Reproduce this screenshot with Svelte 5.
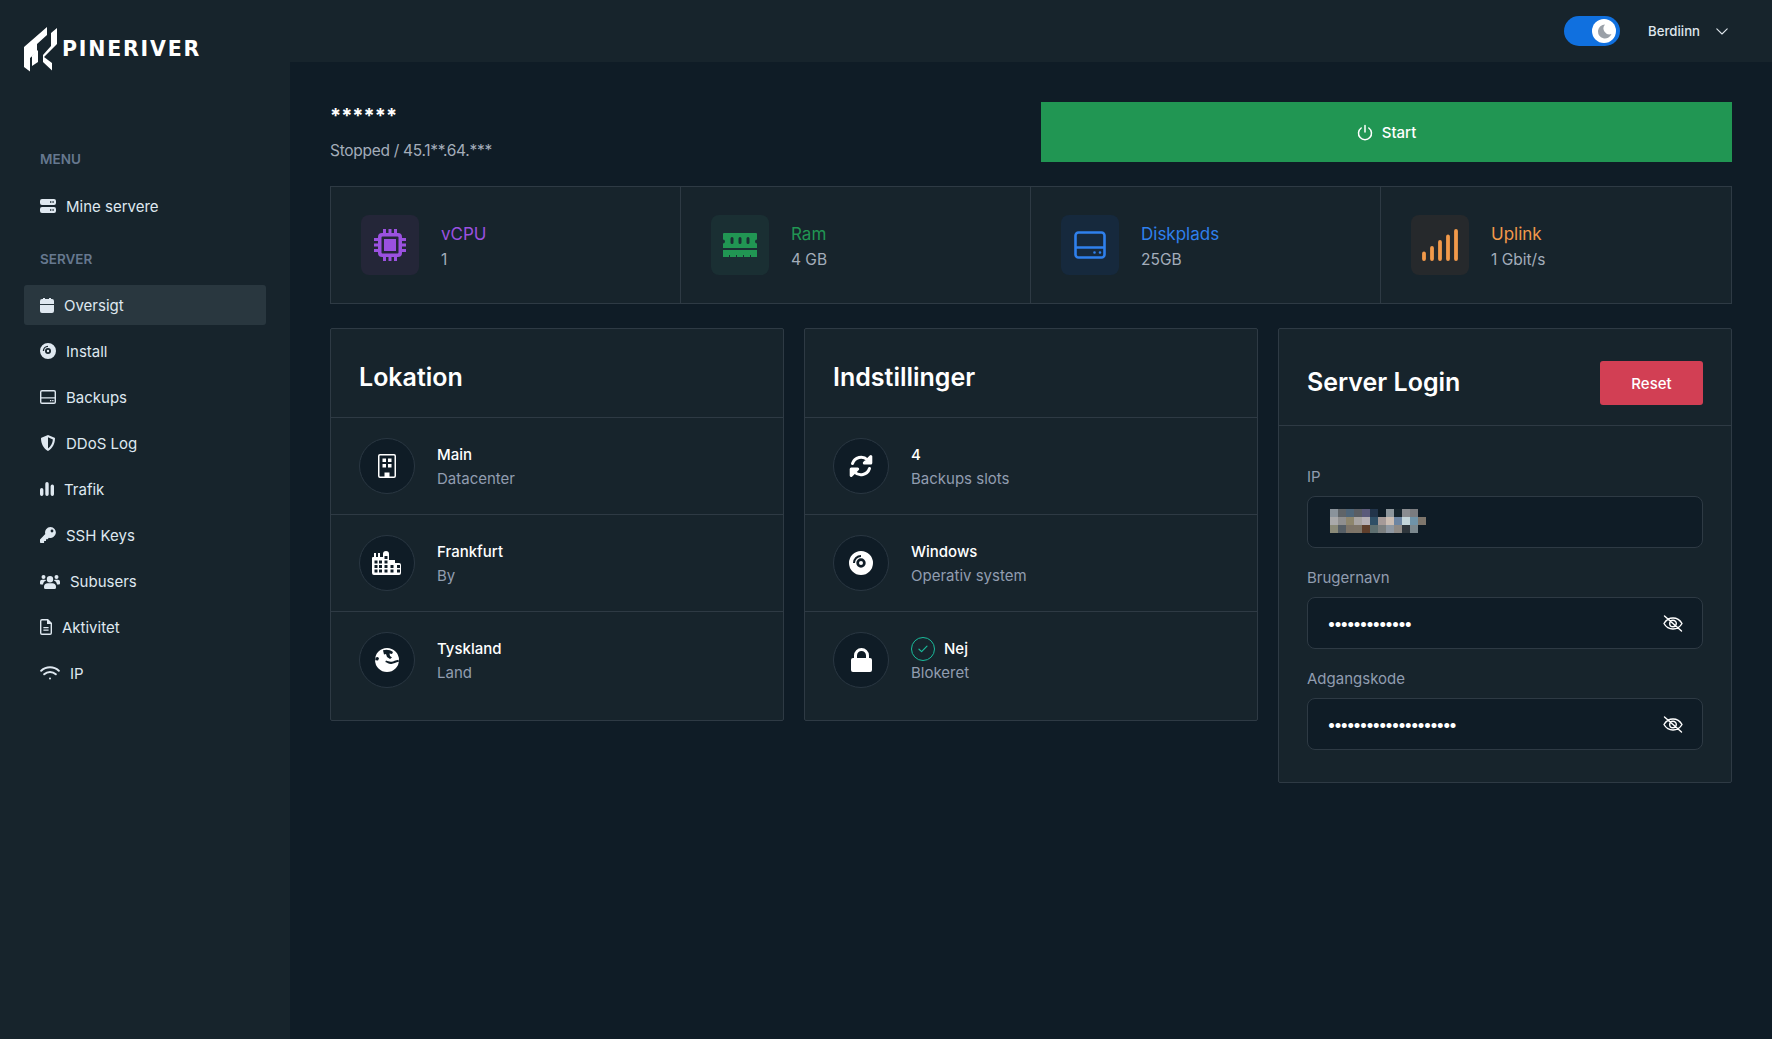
<script lang="ts">
  interface Icon {
    w: number;
    h: number;
    d: string;
    stroke?: number;
  }

  const icons: Record<string, Icon> = {
    server: { w: 16, h: 14, d: "M2 0h12a2 2 0 012 2v2a2 2 0 01-2 2H2a2 2 0 01-2-2V2a2 2 0 012-2zM10 2.3h1.4v1.4H10zM12.4 2.3h1.4v1.4h-1.4zM2 8h12a2 2 0 012 2v2a2 2 0 01-2 2H2a2 2 0 01-2-2v-2a2 2 0 012-2zM10 10.3h1.4v1.4H10zM12.4 10.3h1.4v1.4h-1.4z" },
    calendar: { w: 14, h: 15, d: "M3 0h2v1h4V0h2v1h1a2 2 0 012 2v3H0V3a2 2 0 012-2h1zM0 7h14v6a2 2 0 01-2 2H2a2 2 0 01-2-2z" },
    disc: { w: 16, h: 16, d: "M8 0a8 8 0 110 16A8 8 0 018 0zM8 5a3 3 0 100 6 3 3 0 000-6zM8 6.8a1.2 1.2 0 110 2.4 1.2 1.2 0 010-2.4zM2.8 8A5.2 5.2 0 018 2.8v1.3A3.9 3.9 0 004.1 8z" },
    hdd: { w: 16, h: 14, d: "M2 0h12a2 2 0 012 2v10a2 2 0 01-2 2H2a2 2 0 01-2-2V2a2 2 0 012-2zM2 1.4a.6.6 0 00-.6.6v5.2h13.2V2a.6.6 0 00-.6-.6zM1.4 8.6V12a.6.6 0 00.6.6h12a.6.6 0 00.6-.6V8.6zM10 10h1.3v1.3H10zM12.2 10h1.3v1.3h-1.3z" },
    shield: { w: 16, h: 16, d: "M8 0l6.6 2.8c.3.1.4.4.4.7 0 5-2.5 10-7 12.5C3.500 13.500 1 8.500 1 3.500c0-.3.1-.6.4-.7zM8 2.300V13.600c2.800-2 4.700-5.500 4.900-9z" },
    bars: { w: 14, h: 14, d: "M1.700 6a1.700 1.700 0 011.700 1.700v4.600a1.700 1.700 0 01-3.400 0V7.700A1.700 1.700 0 011.700 6zM7 0a1.700 1.700 0 011.700 1.700v10.600a1.700 1.700 0 01-3.400 0V1.700A1.700 1.700 0 017 0zM12.300 2.500A1.700 1.700 0 0114 4.200v8.100a1.700 1.700 0 01-3.400 0V4.200a1.700 1.700 0 011.700-1.700z" },
    key: { w: 16, h: 16, d: "M10.500 0a5.500 5.500 0 11-1.600 10.800L7.500 12.300H6v1.800H4.100V16H.8a.8.8 0 01-.8-.8v-2.700L5.300 7.100A5.500 5.500 0 0110.500 0zM12 2.600a1.400 1.400 0 100 2.800 1.400 1.400 0 000-2.800z" },
    users: { w: 20, h: 15, d: "M3.500 1a2 2 0 110 4 2 2 0 010-4zM16.500 1a2 2 0 110 4 2 2 0 010-4zM10 2a3.200 3.200 0 110 6.400A3.200 3.200 0 0110 2zM7.500 9.200h5c2 0 3.500 1.500 3.500 3.500v.8a1.500 1.500 0 01-1.500 1.500h-9A1.500 1.500 0 014 13.500v-.8c0-2 1.500-3.500 3.500-3.500zM2 5.800h3c.5 0 1 .2 1.300.5-1.700.7-3 2.100-3.300 4.200H1a1 1 0 01-1-1V7.800a2 2 0 012-2zM15 5.800h3a2 2 0 012 2v1.700a1 1 0 01-1 1h-2c-.3-2.100-1.600-3.500-3.300-4.200.3-.3.800-.5 1.300-.5z" },
    file: { w: 12, h: 16, d: "M2 0h6l4 4v10a2 2 0 01-2 2H2a2 2 0 01-2-2V2a2 2 0 012-2zM2 1.400a.6.6 0 00-.6.6v12c0 .3.3.6.6.6h8c.3 0 .6-.3.6-.6V5H7V1.400zM3.400 8h5.200v1.200H3.400zM3.400 10.600h5.200v1.200H3.400z" },
    wifi: { w: 20, h: 14, stroke: 2, d: "M1.200 4.800a13 13 0 0117.600 0M4.200 8.300a8.500 8.500 0 0111.600 0M10 12.400h.01" },
    cpu: { w: 32, h: 32, d: "M8 4h1V0h3v4h2.500V0h3v4H20V0h3v4h1a4 4 0 014 4v1h4v3h-4v2.500h4v3h-4V20h4v3h-4v1a4 4 0 01-4 4h-1v4h-3v-4h-2.500v4h-3v-4H12v4H9v-4H8a4 4 0 01-4-4v-1H0v-3h4v-2.500H0v-3h4V12H0V9h4V8a4 4 0 014-4zM8.500 7.500a1 1 0 00-1 1v15a1 1 0 001 1h15a1 1 0 001-1v-15a1 1 0 00-1-1zM10 10h12v12H10z" },
    ram: { w: 36, h: 24, d: "M2 0h32a1 1 0 011 1v5.500a2 2 0 000 4V15H1v-4.500a2 2 0 000-4V1a1 1 0 011-1zM10 4a1.500 1.500 0 00-1.500 1.500v4a1.500 1.500 0 003 0v-4A1.500 1.500 0 0010 4zM18 4a1.500 1.500 0 00-1.500 1.500v4a1.500 1.500 0 003 0v-4A1.500 1.500 0 0018 4zM26 4a1.500 1.500 0 00-1.500 1.500v4a1.500 1.500 0 003 0v-4A1.500 1.500 0 0026 4zM1 17h34v7h-6v-2h-1v2h-6v-2h-1v2h-6v-2h-1v2H8v-2H7v2H1z" },
    disk: { w: 32, h: 28, stroke: 2.6, d: "M4.500 1.500h23a3 3 0 013 3v19a3 3 0 01-3 3h-23a3 3 0 01-3-3v-19a3 3 0 013-3zM1.500 16.500h29M20.500 21.500h.01M26 21.500h.01" },
    signal: { w: 36, h: 32, stroke: 3.8, d: "M2 24.500V30M10 19v11M18 13v17M26 7.500V30M34 2v28" },
    building: { w: 18, h: 24, d: "M2 0h14a2 2 0 012 2v20a2 2 0 01-2 2H2a2 2 0 01-2-2V2a2 2 0 012-2zM2 1.500a.5.5 0 00-.5.5v20c0 .3.2.5.5.5h4.500V18.500h5v4H16c.3 0 .5-.2.5-.5V2a.5.5 0 00-.5-.5zM4.500 4.500h3.500V8H4.500zM10 4.500h3.500V8H10zM4.500 10h3.500v3.500H4.500zM10 10h3.500v3.500H10z" },
    city: { w: 30, h: 24, d: "M1 6h1V2h2v4h2V2h2v4h3V3a3 3 0 016 0v6h6v3h4a2 2 0 012 2v8a2 2 0 01-2 2H2a2 2 0 01-2-2V7a1 1 0 011-1zM2.500 9.500h3v3h-3zM7 9.500h3v3H7zM2.500 14h3v3h-3zM7 14h3v3H7zM2.500 18.500h3v3h-3zM7 18.500h3v3H7zM12.500 5h3v3h-3zM12.500 9.500h3v3h-3zM12.500 14h3v3h-3zM12.500 18.500h3v3h-3zM18.500 14h3v3h-3zM18.500 18.500h3v3h-3zM25 14h3v3h-3zM25 18.500h3v3h-3z" },
    globe: { w: 24, h: 24, d: "M12 0a12 12 0 110 24 12 12 0 010-24zM8 2.300c3-1.200 7-.8 10 1.700l-1 2-2.500-.5.5 2.500 2 1.500-2 1.500-3-2-1-3-2 .5zM11 12.500c2 .5 3.500 1.500 5.500 1.200 2-.3 4-1.500 7-2l.3 2c-3 .5-5 2-7.500 2.200-2.500.2-4-1.500-6-2zM.5 9.500l2.500-.5 1 1.500-1 2-2.800-.3z" },
    sync: { w: 24, h: 24, stroke: 3, d: "M3.500 9.500A9 9 0 0118.500 6L20 7.500M21.800 2.500V9h-6.500zM20.500 14.500A9 9 0 015.500 18L4 16.500M2.200 21.500V15h6.500z" },
    discLg: { w: 24, h: 24, d: "M12 0a12 12 0 110 24 12 12 0 010-24zM12 7.300a4.700 4.700 0 100 9.400 4.700 4.700 0 000-9.400zM12 10a2 2 0 110 4 2 2 0 010-4zM4 12a8 8 0 018-8v2a6 6 0 00-6 6z" },
    lock: { w: 21, h: 24, d: "M3 10V7.500a7.500 7.500 0 0115 0V10h1a2 2 0 012 2v10a2 2 0 01-2 2H2a2 2 0 01-2-2V12a2 2 0 012-2zM6 10h9V7.500a4.500 4.500 0 00-9 0z" },
    power: { w: 16, h: 17, stroke: 1.5, d: "M8 1.500V8M4.200 4A6.500 6.500 0 1011.800 4" },
    eyeOff: { w: 20, h: 17, stroke: 1.4, d: "M1 8.500c2-3.500 5-5.500 9-5.500s7 2 9 5.500c-2 3.500-5 5.500-9 5.500s-7-2-9-5.500zM10 5.200a3.300 3.300 0 110 6.600 3.300 3.300 0 010-6.600zM1.500 1l17 15" },
    chevron: { w: 12, h: 7, stroke: 1.1, d: "M.8.8L6 6l5.200-5.200" },
    check: { w: 10, h: 8, stroke: 1.2, d: "M1 4.200l2.600 2.400L9 1.200" },
  };

  const nav = [
    { icon: "calendar", label: "Oversigt", active: true },
    { icon: "disc", label: "Install" },
    { icon: "hdd", label: "Backups" },
    { icon: "shield", label: "DDoS Log" },
    { icon: "bars", label: "Trafik" },
    { icon: "key", label: "SSH Keys" },
    { icon: "users", label: "Subusers" },
    { icon: "file", label: "Aktivitet" },
    { icon: "wifi", label: "IP" },
  ];

  const stats = [
    { icon: "cpu", title: "vCPU", value: "1", tone: "purple" },
    { icon: "ram", title: "Ram", value: "4 GB", tone: "green" },
    { icon: "disk", title: "Diskplads", value: "25GB", tone: "blue" },
    { icon: "signal", title: "Uplink", value: "1 Gbit/s", tone: "orange" },
  ];

  const location = [
    { icon: "building", title: "Main", sub: "Datacenter" },
    { icon: "city", title: "Frankfurt", sub: "By" },
    { icon: "globe", title: "Tyskland", sub: "Land" },
  ];

  const settings = [
    { icon: "sync", title: "4", sub: "Backups slots" },
    { icon: "discLg", title: "Windows", sub: "Operativ system" },
    { icon: "lock", title: "Nej", sub: "Blokeret", ok: true },
  ];

  // censored ip, one row per line of mosaic blocks
  const mosaic = [
    ["#8a939b", "#5f6468", "#4f6578", "#5a5d63", "#5b5a7a", "#22344a", "", "#8d969c", "#16242c", "#8a8c90", "#7a7c80"],
    ["#a9a9aa", "#8f8f8f", "#8e866d", "#a8a4a2", "#b6b0b5", "#2f4f66", "#a59a98", "#cbbdb3", "#6d85a2", "#c3d5da", "#6f93a8", "#7e766c"],
    ["#8a8a78", "#565f66", "#7d7468", "#7e7568", "#5f3f2c", "#5e6f70", "#7c8080", "#8f98a2", "#8e8a86", "#2e363c", "#7b888e"],
  ];
</script>

{#snippet glyph(name: string)}
  {@const i = icons[name]}
  <svg
    class="glyph"
    class:line={i.stroke}
    width={i.w}
    height={i.h}
    viewBox="0 0 {i.w} {i.h}"
    stroke-width={i.stroke}
  >
    <path d={i.d} />
  </svg>
{/snippet}

{#snippet infoCard(heading: string, rows: { icon: string; title: string; sub: string; ok?: boolean }[])}
  <section class="card">
    <h2 class="card-head">{heading}</h2>
    <div class="rows">
      {#each rows as row}
        <div class="row">
          <span class="circle">{@render glyph(row.icon)}</span>
          <div>
            <div class="row-title">
              {#if row.ok}
                <span class="ok">{@render glyph("check")}</span>
              {/if}
              {row.title}
            </div>
            <div class="row-sub">{row.sub}</div>
          </div>
        </div>
      {/each}
    </div>
  </section>
{/snippet}

<div class="app">
  <aside class="sidebar">
    <div class="logo">
      <svg width="34" height="46" viewBox="24 26 34 46">
        <path fill="#fff" d="M24 47L47 27V35L37 44V52L30 58V71.500L24 67Z" />
        <path fill="#fff" d="M32 56L38 50V62L32 66Z" />
        <path fill="#fff" d="M51 33L57 28V44L44 57L52 63V70.500L43 62V55L51 46Z" />
      </svg>
      <span>PINERIVER</span>
    </div>

    <div class="nav-label menu">MENU</div>
    <a class="item" href="#servers">{@render glyph("server")}<span>Mine servere</span></a>

    <div class="nav-label server">SERVER</div>
    <nav class="items">
      {#each nav as item}
        <a class="item" class:active={item.active} href="#{item.label}">
          {@render glyph(item.icon)}<span>{item.label}</span>
        </a>
      {/each}
    </nav>
  </aside>

  <div class="content">
    <header class="topbar">
      <span class="toggle">
        <span class="knob">
          <svg width="15" height="15" viewBox="0 0 15 15"><path fill="#9aa0a8" d="M8 .5a7 7 0 106.500 9.600A6 6 0 018 .5z" /></svg>
        </span>
      </span>
      <span class="user">Berdiinn</span>
      {@render glyph("chevron")}
    </header>

    <main class="main">
      <div class="top">
        <div class="name">
          <div class="stars">******</div>
          <div class="status">Stopped / 45.1**.64.***</div>
        </div>
        <button class="start">{@render glyph("power")}<span>Start</span></button>
      </div>

      <div class="stats">
        {#each stats as s}
          <div class="stat {s.tone}">
            <span class="stat-icon">{@render glyph(s.icon)}</span>
            <div>
              <div class="stat-title">{s.title}</div>
              <div class="stat-value">{s.value}</div>
            </div>
          </div>
        {/each}
      </div>

      <div class="cards">
        {@render infoCard("Lokation", location)}
        {@render infoCard("Indstillinger", settings)}

        <section class="card">
          <div class="login-head">
            <h2>Server Login</h2>
            <button class="reset">Reset</button>
          </div>
          <div class="form">
            <div class="field-label">IP</div>
            <div class="input">
              <svg class="mosaic" width="96" height="24" viewBox="0 0 96 24">
                {#each mosaic as line, y}
                  {#each line as c, x}
                    {#if c}<rect x={x * 8} y={y * 8} width="8" height="8" fill={c} />{/if}
                  {/each}
                {/each}
              </svg>
            </div>
            <div class="field-label">Brugernavn</div>
            <div class="input">
              <span class="dots">•••••••••••••</span>
              {@render glyph("eyeOff")}
            </div>
            <div class="field-label">Adgangskode</div>
            <div class="input">
              <span class="dots">••••••••••••••••••••</span>
              {@render glyph("eyeOff")}
            </div>
          </div>
        </section>
      </div>
    </main>
  </div>
</div>

<style>
  :global(body) {
    background: #0f1c26;
    font-family: Inter, "Liberation Sans", sans-serif;
  }

  .glyph {
    flex: none;
    fill: currentColor;
    fill-rule: evenodd;
  }

  .glyph.line {
    fill: none;
    stroke: currentColor;
    stroke-linecap: round;
    stroke-linejoin: round;
  }

  .app {
    display: grid;
    grid-template-columns: 290px 1fr;
    min-height: 1039px;
  }

  .sidebar {
    background: #17242c;
    padding: 0 24px;
  }

  .logo {
    display: flex;
    align-items: center;
    gap: 4px;
    padding-top: 26px;
    height: 46px;
    color: #fff;
    font: 700 20.5px "DejaVu Sans", sans-serif;
    letter-spacing: 1.8px;
  }

  .nav-label {
    padding-left: 16px;
    line-height: 20px;
    color: #66788f;
    font-size: 13.5px;
    font-weight: 600;
  }

  .menu {
    margin-top: 77px;
    margin-bottom: 17px;
  }

  .server {
    margin-top: 23px;
    margin-bottom: 16px;
  }

  .items {
    display: flex;
    flex-direction: column;
    gap: 6px;
  }

  .item {
    display: flex;
    align-items: center;
    gap: 10px;
    height: 40px;
    padding-left: 16px;
    border-radius: 3px;
    color: #dfe8f0;
    font-size: 15px;
    text-decoration: none;
  }

  .item.active {
    background: #29373f;
  }

  .content {
    min-width: 0;
  }

  .topbar {
    display: flex;
    align-items: center;
    height: 62px;
    padding-right: 44px;
    justify-content: flex-end;
    background: #17242c;
    color: #dfe6ec;
  }

  .toggle {
    display: flex;
    align-items: center;
    justify-content: flex-end;
    width: 56px;
    height: 30px;
    padding-right: 4px;
    box-sizing: border-box;
    border-radius: 15px;
    background: #1070df;
  }

  .knob {
    display: flex;
    align-items: center;
    justify-content: center;
    width: 24px;
    height: 24px;
    border-radius: 50%;
    background: #fff;
  }

  .user {
    margin: 0 16px 0 28px;
    font-size: 13.2px;
    font-weight: 500;
  }

  .main {
    padding: 40px 40px 0;
  }

  .top {
    display: flex;
    justify-content: space-between;
    margin-bottom: 24px;
  }

  .stars {
    margin-top: 2px;
    line-height: 24px;
    color: #fff;
    font-size: 20px;
    font-weight: 700;
  }

  .status {
    margin-top: 12px;
    line-height: 22px;
    color: #a3adba;
    font-size: 15.5px;
    letter-spacing: -0.3px;
  }

  .start {
    display: flex;
    align-items: center;
    justify-content: center;
    gap: 9px;
    width: 691px;
    height: 60px;
    border: none;
    background: #219653;
    color: #fff;
    font: 500 15px Inter, sans-serif;
  }

  .stats {
    display: grid;
    grid-template-columns: repeat(4, 1fr);
    margin-bottom: 24px;
    border: 1px solid #2e3a44;
    background: #17242c;
  }

  .stat {
    display: flex;
    align-items: center;
    gap: 22px;
    padding: 28px 30px;
    border-right: 1px solid #2e3a44;
  }

  .stat:last-child {
    border-right: none;
  }

  .stat-icon {
    display: flex;
    align-items: center;
    justify-content: center;
    width: 58px;
    height: 60px;
    border-radius: 8px;
  }

  .stat-title {
    padding-top: 3px;
    line-height: 24px;
    font-size: 17px;
  }

  .stat-value {
    line-height: 24px;
    margin-top: 2px;
    color: #a3adba;
    font-size: 15.5px;
  }

  .purple .stat-title,
  .purple .stat-icon {
    color: #9b51e0;
  }

  .purple .stat-icon {
    background: #242638;
  }

  .green .stat-title,
  .green .stat-icon {
    color: #219653;
  }

  .green .stat-icon {
    background: #1a2f33;
  }

  .blue .stat-title,
  .blue .stat-icon {
    color: #2f80ed;
  }

  .blue .stat-icon {
    background: #16293d;
  }

  .orange .stat-title,
  .orange .stat-icon {
    color: #f2994a;
  }

  .orange .stat-icon {
    background: #26292c;
  }

  .cards {
    display: grid;
    grid-template-columns: repeat(3, 1fr);
    gap: 20px;
    align-items: start;
  }

  .card {
    border: 1px solid #2e3a44;
    border-radius: 2px;
    background: #17242c;
    color: #fff;
  }

  h2 {
    margin: 0;
    font-size: 25px;
    font-weight: 600;
  }

  .card-head {
    height: 88px;
    padding-left: 28px;
    line-height: 96px;
    border-bottom: 1px solid #2e3a44;
  }

  .rows {
    padding-bottom: 12px;
  }

  .row {
    display: flex;
    align-items: center;
    gap: 22px;
    padding: 20px 28px;
    border-bottom: 1px solid #2e3a44;
  }

  .row:last-child {
    border-bottom: none;
  }

  .circle {
    display: flex;
    align-items: center;
    justify-content: center;
    width: 56px;
    height: 56px;
    box-sizing: border-box;
    border: 1px solid #2a3742;
    border-radius: 50%;
    background: #0f1c26;
  }

  .row-title {
    display: flex;
    align-items: center;
    gap: 9px;
    height: 24px;
    padding-top: 1px;
    font-size: 15px;
    font-weight: 500;
  }

  .row-sub {
    line-height: 24px;
    color: #919db0;
    font-size: 15px;
  }

  .ok {
    display: flex;
    align-items: center;
    justify-content: center;
    width: 24px;
    height: 24px;
    box-sizing: border-box;
    border: 1.5px solid #1abc9c;
    border-radius: 50%;
    color: #1abc9c;
  }

  .login-head {
    display: flex;
    align-items: center;
    justify-content: space-between;
    height: 84px;
    padding: 12px 28px 0;
    border-bottom: 1px solid #2e3a44;
  }

  .login-head h2 {
    margin-bottom: 3px;
  }

  .reset {
    width: 103px;
    height: 44px;
    border: none;
    border-radius: 3px;
    background: #d23f54;
    color: #fff;
    font: 500 15px Inter, sans-serif;
  }

  .form {
    padding: 40px 28px 32px;
  }

  .field-label {
    margin-bottom: 9px;
    padding-top: 1px;
    line-height: 20px;
    color: #919db0;
    font-size: 15px;
  }

  .input {
    display: flex;
    align-items: center;
    justify-content: space-between;
    height: 52px;
    margin-bottom: 19px;
    padding: 0 19px 0 21px;
    box-sizing: border-box;
    border: 1px solid #2e3a44;
    border-radius: 8px;
    background: #0f1c26;
    color: #fff;
  }

  .input:last-child {
    margin-bottom: 0;
  }

  .mosaic {
    margin: -3px 0 0 1px;
  }

  .dots {
    margin-left: -2px;
    font-size: 16px;
    letter-spacing: -2.6px;
  }
</style>
